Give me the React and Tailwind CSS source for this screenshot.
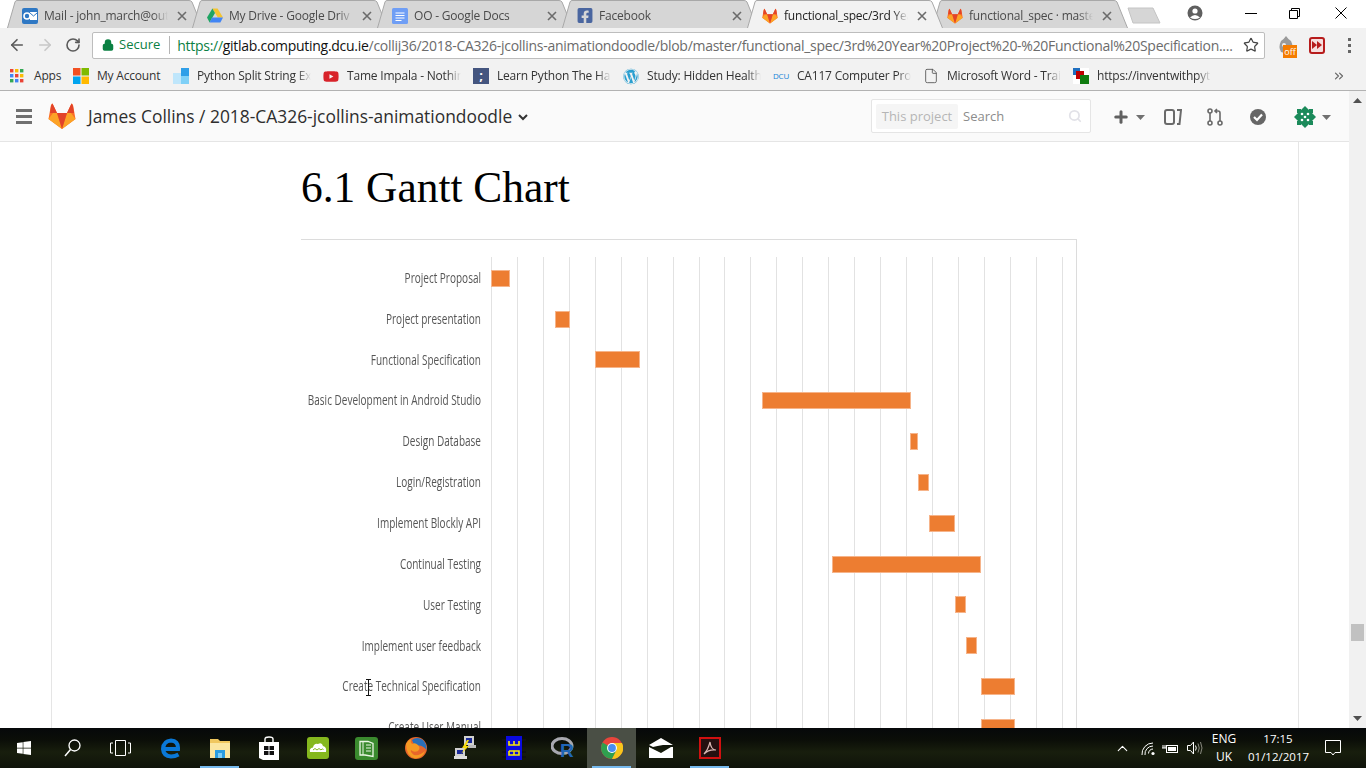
import { ArrowLeft, ArrowRight, RotateCw, Star, ChevronsRight, Search, ChevronUp, Lock, File, Plus } from "lucide-react";
import { FaWindows, FaWordpress, FaYoutube, FaFacebookSquare } from "react-icons/fa";

const GitlabLogo = ({ size = 16 }) => (
  <svg width={size} height={size} viewBox="0 0 28 26">
    <path d="M14 26 L0.5 16 L3 2 Q3.5 0.5 4.5 0.5 L9 10 H19 L23.5 0.5 Q24.5 0.5 25 2 L27.5 16 Z" fill="#fc6d26" />
    <path d="M14 26 L0.5 16 L5 10 H9 Z" fill="#fca326" />
    <path d="M14 26 L27.5 16 L23 10 H19 Z" fill="#fca326" />
    <path d="M14 26 L9 10 H19 Z" fill="#e24329" />
    <path d="M4.5 0.5 L9 10 H2 L3 3 Z M23.5 0.5 L19 10 H26 L25 3 Z" fill="#e24329" />
  </svg>
);

const Outlook = () => (
  <svg width="16" height="16" viewBox="0 0 16 16">
    <rect x="0" y="0" width="16" height="16" rx="2" fill="#2f78c4" />
    <rect x="8" y="4" width="7" height="8" fill="#fff" />
    <path d="M8 5 L11.5 8 L15 5" stroke="#2f78c4" fill="none" />
    <circle cx="5" cy="8" r="3" fill="none" stroke="#fff" strokeWidth="1.6" />
  </svg>
);

const Drive = () => (
  <svg width="16" height="15" viewBox="0 0 16 14">
    <path d="M5.4 0 H10.6 L16 9 H10.8 Z" fill="#f4c430" />
    <path d="M5.4 0 L0 9 L2.6 14 L8 4.6 Z" fill="#1fa463" />
    <path d="M5 9 H16 L13.4 14 H2.6 Z" fill="#4285f4" />
  </svg>
);

const Docs = () => (
  <svg width="16" height="16" viewBox="0 0 16 16">
    <rect width="16" height="16" rx="1.5" fill="#6f9ef5" />
    <path d="M3.5 5 H12.5 M3.5 7.5 H12.5 M3.5 10 H12.5 M3.5 12.5 H9.5" stroke="#fff" strokeWidth="1.2" />
  </svg>
);

const tabs = [
  { icon: <Outlook />, title: "Mail - john_march@out" },
  { icon: <Drive />, title: "My Drive - Google Driv" },
  { icon: <Docs />, title: "OO - Google Docs" },
  { icon: <FaFacebookSquare className="text-[#4a66a0] text-[17px]" />, title: "Facebook" },
  { icon: <GitlabLogo />, title: "functional_spec/3rd Yea", active: true },
  { icon: <GitlabLogo />, title: "functional_spec · maste" },
];

function Tab({ icon, title, active }) {
  return (
    <div className={`relative h-[28px] w-[196px] -mr-[11px] shrink-0 ${active ? "z-10" : ""}`}>
      <svg className="absolute inset-0" width="196" height="28" viewBox="0 0 196 28">
        <path d="M0.5 28 L8 2 Q8.5 0.5 10 0.5 L182 0.5 Q184 0.5 185 2 L195.5 28" fill={active ? "#f2f2f2" : "#d6d6d6"} stroke="#a8a8a8" />
      </svg>
      <div className="relative h-full flex items-center pl-[15px] pt-[3px]">
        <span className="w-[16px] h-[16px] flex items-center justify-center shrink-0">{icon}</span>
        <span className={`ml-[6px] w-[124px] whitespace-nowrap overflow-hidden tracking-[-0.2px] text-[12px] [mask-image:linear-gradient(to_right,black_88%,transparent)] ${active ? "text-[#222]" : "text-[#4a4a4a]"}`}>{title}</span>
        <svg className="ml-[9px]" width="10" height="10" viewBox="0 0 10 10">
          <path d="M1 1 L9 9 M9 1 L1 9" stroke="#6b6b6b" strokeWidth="1.6" />
        </svg>
      </div>
    </div>
  );
}

const AppsGrid = () => (
  <svg width="14" height="14" viewBox="0 0 14 14">
    {[
      ["#ea4335", 0, 0], ["#fbbc05", 5, 0], ["#34a853", 10, 0],
      ["#4285f4", 0, 5], ["#ea4335", 5, 5], ["#fbbc05", 10, 5],
      ["#34a853", 0, 10], ["#4285f4", 5, 10], ["#ea4335", 10, 10],
    ].map(([c, x, y], i) => <rect key={i} x={x} y={y} width="3.4" height="3.4" fill={c} />)}
  </svg>
);

const Microsoft = () => (
  <svg width="16" height="16" viewBox="0 0 16 16">
    <rect width="7.5" height="7.5" fill="#f25022" />
    <rect x="8.5" width="7.5" height="7.5" fill="#7fba00" />
    <rect y="8.5" width="7.5" height="7.5" fill="#00a4ef" />
    <rect x="8.5" y="8.5" width="7.5" height="7.5" fill="#ffb900" />
  </svg>
);

const BlueTiles = () => (
  <svg width="16" height="16" viewBox="0 0 16 16">
    <rect x="8" width="8" height="8" fill="#2f9fe8" />
    <rect y="5" width="8" height="11" fill="#bfe6fb" />
    <rect x="8" y="8" width="8" height="8" fill="#7fd0f7" />
  </svg>
);

const Semicolon = () => (
  <span className="w-[16px] h-[16px] bg-[#44557f] text-white text-[13px] font-bold leading-[15px] text-center">;</span>
);

const Overlap = () => (
  <svg width="16" height="16" viewBox="0 0 16 16">
    <rect width="16" height="16" fill="#fff" />
    <rect x="0" y="0" width="7" height="7" fill="#1f6fc0" />
    <rect x="3" y="3" width="8" height="8" fill="#c00000" />
    <rect x="7" y="7" width="9" height="9" fill="#107c10" />
  </svg>
);

const bookmarks = [
  { icon: <BlueTiles />, label: "Python Split String Ex" },
  { icon: <FaYoutube className="text-[#d8232a] text-[17px]" />, label: "Tame Impala - Nothin" },
  { icon: <Semicolon />, label: "Learn Python The Har" },
  { icon: <FaWordpress className="text-[#2a9fd0] text-[17px]" />, label: "Study: Hidden Health" },
  { icon: <span className="text-[8px] text-[#1683d8]">DCU</span>, label: "CA117 Computer Pro" },
  { icon: <File size={16} strokeWidth={1.3} className="text-[#555]" />, label: "Microsoft Word - Trai" },
  { icon: <Overlap />, label: "https://inventwithpyt" },
];

const tasks = [
  { name: "Project Proposal", from: 491, to: 510 },
  { name: "Project presentation", from: 555, to: 569.5 },
  { name: "Functional Specification", from: 595, to: 640 },
  { name: "Basic Development in Android Studio", from: 762, to: 910.5 },
  { name: "Design Database", from: 910, to: 918 },
  { name: "Login/Registration", from: 918, to: 929 },
  { name: "Implement Blockly API", from: 929, to: 955 },
  { name: "Continual Testing", from: 832, to: 981 },
  { name: "User Testing", from: 955, to: 966 },
  { name: "Implement user feedback", from: 966, to: 977 },
  { name: "Create Technical Specification", from: 981, to: 1014.5 },
  { name: "Create User Manual", from: 981, to: 1014.5 },
];

const gridLines = Array.from({ length: 23 }, (_, i) => i);

function GanttChart() {
  return (
    <div className="relative">
      <div className="absolute top-0 bottom-0 left-[190px] flex">
        {gridLines.map((i) => (
          <div key={i} className="w-[25.95px] border-l border-[#e2e2e2]" />
        ))}
      </div>
      {tasks.map((t) => (
        <div key={t.name} className="relative flex items-center h-[40.85px]">
          <div className="w-[180px] shrink-0 flex justify-end whitespace-nowrap text-[14px] text-[#555] scale-x-[0.715] origin-right">{t.name}</div>
          <div className="relative ml-[10px] flex-1 h-full">
            <div
              className="absolute top-[12.7px] h-[17px] bg-[#ed7d31] border border-[#f6b48a]"
              style={{ left: t.from - 491, width: t.to - t.from }}
            />
          </div>
        </div>
      ))}
      <svg className="absolute left-[64px] top-[422px]" width="7" height="17" viewBox="0 0 7 17">
        <path d="M1 0.5 H6 M3.5 0.5 V16.5 M1 16.5 H6" stroke="#111" />
      </svg>
    </div>
  );
}

const NavIcon = ({ children, className = "" }) => <span className={`flex items-center justify-center ${className}`}>{children}</span>;

const Caret = ({ color = "#707070" }) => (
  <svg width="9" height="5" viewBox="0 0 9 5"><path d="M0 0 H9 L4.5 5 Z" fill={color} /></svg>
);

const Avatar = () => (
  <svg width="24" height="24" viewBox="0 0 24 24">
    <path d="M12 1 L23 12 L12 23 L1 12 Z" fill="#1b8a5a" />
    <path d="M4 4 H8 V8 H4 Z M16 4 H20 V8 H16 Z M4 16 H8 V20 H4 Z M16 16 H20 V20 H16 Z" fill="#1b8a5a" />
    {[[9, 9], [15, 9], [9, 15], [15, 15], [12, 12]].map(([x, y]) => (
      <circle key={`${x}${y}`} cx={x} cy={y} r="1.3" fill="#fff" />
    ))}
  </svg>
);

const Chrome = () => (
  <svg width="22" height="22" viewBox="0 0 22 22">
    <circle cx="11" cy="11" r="11" fill="#e8453c" />
    <path d="M11 11 L1.5 5.5 A11 11 0 0 0 11 22 L16.5 12 Z" fill="#2fa04f" />
    <path d="M11 6 H21 A11 11 0 0 1 11 22 L16 12 Z" fill="#f8c51c" />
    <circle cx="11" cy="11" r="5" fill="#fff" />
    <circle cx="11" cy="11" r="3.9" fill="#4a8df0" />
  </svg>
);

const EdgeLogo = () => (
  <svg width="20" height="22" viewBox="0 0 20 22">
    <path d="M3 12 H17 Q17.5 4 10 3.5 Q2.5 4 2 12 Q2.5 19 10 19.5 Q14 19.5 17.5 17.5" fill="none" stroke="#0a78d7" strokeWidth="4" />
  </svg>
);

const Explorer = () => (
  <svg width="22" height="22" viewBox="0 0 22 22">
    <path d="M1 2 H9 L11 4 H21 V20 H1 Z" fill="#f0c75e" />
    <rect x="1" y="6" width="20" height="15" fill="#fbe6a0" />
    <path d="M6 21 V13 H16 V21 H13 V16 H9 V21 Z" fill="#2a9ce0" />
    <rect x="9" y="16" width="4" height="5" fill="#7fcdf5" />
  </svg>
);

const Store = () => (
  <svg width="20" height="24" viewBox="0 0 20 24">
    <path d="M6 6 V3 Q6 1 10 1 Q14 1 14 3 V6" fill="none" stroke="#fff" strokeWidth="1.4" />
    <path d="M0 6 H20 V24 H4 L0 22 Z" fill="#fff" />
    <path d="M5 10 H9.5 V14 H5 Z M10.5 10 H15 V14 H10.5 Z M5 15 H9.5 V19 H5 Z M10.5 15 H15 V19 H10.5 Z" fill="#111" />
  </svg>
);

const CloudApp = () => (
  <svg width="22" height="22" viewBox="0 0 22 22">
    <rect width="22" height="22" rx="3" fill="#85b81e" />
    <path d="M3 15 Q2 11 6 10.5 Q7 6 11 7 Q15 5 16 9 Q20 10 19 15 Z" fill="#fff" />
    <path d="M6 13 Q8 10 10 13 Q12 10 14 13 Q15 11 16.5 12.5" fill="none" stroke="#85b81e" />
  </svg>
);

const Notebook = () => (
  <svg width="23" height="23" viewBox="0 0 23 23">
    <rect width="23" height="23" rx="3" fill="#3a8a2e" />
    <path d="M5 4.5 H13 L18 6.5 V19.5 L10 18 H5 Z" fill="none" stroke="#eaf6e4" strokeWidth="1.3" />
    <path d="M8 4.5 V18 M11 8 H16 M11 11 H16 M11 14 H16" stroke="#eaf6e4" />
  </svg>
);

const Firefox = () => (
  <svg width="22" height="22" viewBox="0 0 22 22">
    <circle cx="11" cy="11" r="11" fill="#e8662a" />
    <path d="M7 3 Q12 -1 18 3 Q22 7 21.5 13 Q17 7 11 9 Q8 7 7 3 Z" fill="#2a6fb8" />
    <path d="M1 7 Q3 3 6 2 Q5 5 7 7 Q10 5 13 8 Q16 11 13 14 Q9 16 6 13 Q5 15 9 18 Q15 19 20 14 Q18 21 10 21.5 Q1 19 1 7 Z" fill="#f59a23" />
  </svg>
);

const Putty = () => (
  <svg width="22" height="24" viewBox="0 0 22 24">
    <rect x="10" y="0" width="10" height="9" fill="#d0d0d0" />
    <rect x="12" y="2" width="6" height="5" fill="#1a2a9a" />
    <rect x="14" y="9" width="8" height="3" fill="#bbb" />
    <rect x="1" y="12" width="10" height="8" fill="#d0d0d0" />
    <rect x="3" y="14" width="6" height="4" fill="#1a2a9a" />
    <rect x="0" y="20" width="13" height="3" fill="#ddd" />
    <path d="M13 4 L8 12 H11 L7 18 L15 10 H12 L15 4 Z" fill="#f5d90a" />
  </svg>
);

const W3Chip = () => (
  <svg width="24" height="24" viewBox="0 0 24 24">
    <path d="M0 4 H4 M20 4 H24 M0 10 H4 M20 10 H24 M0 16 H4 M20 16 H24 M0 21 H4 M20 21 H24" stroke="#111" strokeWidth="2" />
    <rect x="4" y="0" width="16" height="24" fill="#0a0ae0" />
    <path d="M7 5 V9 H17 V5 M12 5 V9 M7 15 V19 H17 V15 H7 M12 15 V19" fill="none" stroke="#f5e60a" strokeWidth="1.6" />
  </svg>
);

const RLogo = () => (
  <svg width="24" height="22" viewBox="0 0 24 22">
    <ellipse cx="11" cy="9" rx="10" ry="7.5" fill="none" stroke="#a8a8b0" strokeWidth="3" />
    <text x="9" y="20" fontSize="19" fontWeight="bold" fontFamily="Liberation Sans" fill="#1f65b7">R</text>
  </svg>
);

const MailTile = () => (
  <svg width="24" height="20" viewBox="0 0 24 20">
    <path d="M0 7 L12 0 L24 7 L14 7 Q8 8 4 9 Z" fill="#fff" />
    <path d="M0 9 L12 15 L22 9 L24 9 V20 H0 Z" fill="#fff" />
  </svg>
);

const Acrobat = () => (
  <span className="w-[22px] h-[22px] bg-[#241010] border-2 border-[#d01010] flex items-center justify-center">
    <svg width="14" height="14" viewBox="0 0 14 14">
      <path d="M1 13 Q5 9 7 1 Q8 9 13 9 Q6 8 1 13 Z" fill="none" stroke="#d8b8b4" strokeWidth="1.2" />
    </svg>
  </span>
);

const WifiArcs = () => (
  <svg width="16" height="15" viewBox="0 0 16 15">
    <circle cx="13" cy="12.5" r="1.6" fill="#fff" />
    <path d="M8.5 12.5 A4.5 4.5 0 0 1 13 8 M5 14 A8 8 0 0 1 13 5 M2 14 A11 11 0 0 1 13 2" fill="none" stroke="#fff" />
  </svg>
);

const Speaker = () => (
  <svg width="17" height="14" viewBox="0 0 17 14">
    <path d="M0.5 4.5 H3.5 L6.5 1 V13 L3.5 9.5 H0.5 Z" fill="none" stroke="#fff" />
    <path d="M8.5 4.5 Q10 7 8.5 9.5" fill="none" stroke="#fff" />
    <path d="M11 2.5 Q13.5 7 11 11.5 M13.5 1 Q16.5 7 13.5 13" fill="none" stroke="#8a8a80" />
  </svg>
);

const taskbarIcons = [
  { key: "edge", icon: <EdgeLogo /> },
  { key: "explorer", icon: <Explorer />, open: true },
  { key: "store", icon: <Store /> },
  { key: "cloud", icon: <CloudApp /> },
  { key: "notes", icon: <Notebook /> },
  { key: "firefox", icon: <Firefox /> },
  { key: "putty", icon: <Putty /> },
  { key: "w3", icon: <W3Chip /> },
  { key: "r", icon: <RLogo /> },
  { key: "chrome", icon: <Chrome />, open: true, current: true },
  { key: "mail", icon: <MailTile /> },
  { key: "acrobat", icon: <Acrobat />, open: true },
];

export default function App() {
  return (
    <div className="w-[1366px] h-[768px] overflow-hidden flex flex-col bg-white font-['Open_Sans',sans-serif]">
      {/* tab strip */}
      <div className="h-[28px] shrink-0 flex bg-white pl-[7px] relative">
        {tabs.map((t) => <Tab key={t.title} {...t} />)}
        <svg className="ml-[10px] mt-[7px]" width="34" height="17" viewBox="0 0 34 17">
          <path d="M1 1 H26 L33 16 H6 Z" fill="#d6d6d6" stroke="#c4c4c4" />
        </svg>
        <div className="ml-auto flex items-center h-[28px] pb-[2px]">
          <svg width="16" height="16" viewBox="0 0 16 16" className="mr-[42px]">
            <circle cx="8" cy="8" r="7.5" fill="#5f5f5f" />
            <circle cx="8" cy="6" r="2.6" fill="#fff" />
            <path d="M3 12.5 Q8 7.5 13 12.5 Q8 15.5 3 12.5 Z" fill="#fff" />
          </svg>
          <span className="w-[12px] h-[1px] bg-black mr-[32px]" />
          <svg width="11" height="11" viewBox="0 0 11 11" className="mr-[35px]">
            <path d="M0.5 2.5 H8.5 V10.5 H0.5 Z M2.5 2.5 V0.5 H10.5 V8.5 H8.5" fill="none" stroke="#000" />
          </svg>
          <svg width="12" height="12" viewBox="0 0 12 12" className="mr-[19px]">
            <path d="M0.5 0.5 L11.5 11.5 M11.5 0.5 L0.5 11.5" stroke="#000" />
          </svg>
        </div>
      </div>

      {/* toolbar */}
      <div className="h-[34px] shrink-0 bg-[#f2f2f2] flex items-center relative">
        <ArrowLeft size={18} strokeWidth={2.2} className="ml-[8px] text-[#5a5a5a]" />
        <ArrowRight size={18} strokeWidth={2.2} className="ml-[10px] text-[#c8c8c8]" />
        <RotateCw size={16} strokeWidth={2.4} className="ml-[11px] text-[#5a5a5a]" />
        <div className="ml-[11px] w-[1173px] h-[27px] bg-white border border-[#bdbdbd] rounded-[2px] flex items-center">
          <Lock size={12} strokeWidth={3} className="ml-[9px] text-[#0b8043] fill-[#0b8043]" />
          <span className="ml-[5px] text-[13px] text-[#0b8043]">Secure</span>
          <span className="ml-[9px] w-[1px] h-[18px] bg-[#b5b5b5]" />
          <span className="ml-[7px] text-[14px] whitespace-nowrap tracking-[-0.28px] text-[#6b6b6b]">
            <span className="text-[#0b8043]">https://</span>
            <span className="text-[#111]">gitlab.computing.dcu.ie</span>
            /collij36/2018-CA326-jcollins-animationdoodle/blob/master/functional_spec/3rd%20Year%20Project%20-%20Functional%20Specification....
          </span>
          <Star size={16} strokeWidth={1.8} className="ml-auto mr-[5px] text-[#444] shrink-0" />
        </div>
        <span className="relative ml-[11px] w-[20px] h-[20px] flex items-center justify-center">
          <svg width="16" height="18" viewBox="0 0 16 18">
            <path d="M8 0 Q6 3 3 5 Q0 11 3 16 Q8 18 13 16 Q16 11 13 5 Q10 3 8 0 Z" fill="#9a9a9a" />
            <circle cx="6" cy="9" r="2" fill="#eee" />
          </svg>
          <span className="absolute left-[7px] top-[10px] w-[14px] h-[13px] bg-[#f57c00] text-white text-[9px] leading-[13px] text-center">off</span>
        </span>
        <span className="ml-[13px] w-[16px] h-[17px] rounded-[3px] border-2 border-[#b71c1c] bg-[#f6dede] flex items-center justify-center">
          <svg width="10" height="8" viewBox="0 0 10 8"><path d="M0 0 L5 4 L0 8 Z M5 0 L10 4 L5 8 Z" fill="#b71c1c" /></svg>
        </span>
        <span className="ml-[23px] flex flex-col gap-[3px]">
          <i className="w-[3px] h-[3px] bg-[#666]" />
          <i className="w-[3px] h-[3px] bg-[#666]" />
          <i className="w-[3px] h-[3px] bg-[#666]" />
        </span>
      </div>

      {/* bookmarks bar */}
      <div className="h-[29px] shrink-0 bg-[#f2f2f2] border-b border-[#b2b2b2] flex items-center relative text-[12px] text-[#333] tracking-[-0.2px]">
        <span className="ml-[10px] w-[63px] flex items-center">
          <AppsGrid />
          <span className="ml-[10px]">Apps</span>
        </span>
        <span className="w-[100px] flex items-center">
          <Microsoft />
          <span className="ml-[8px] whitespace-nowrap">My Account</span>
        </span>
        {bookmarks.map((b) => (
          <span key={b.label} className="w-[150px] flex items-center">
            <span className="w-[16px] h-[16px] flex items-center justify-center">{b.icon}</span>
            <span className="ml-[8px] w-[114px] whitespace-nowrap overflow-hidden [mask-image:linear-gradient(to_right,black_88%,transparent)]">
              {b.label}
            </span>
          </span>
        ))}
        <ChevronsRight size={14} className="absolute left-[1332px] top-[7px] text-[#666]" />
      </div>

      {/* page + scrollbar */}
      <div className="flex-1 min-h-0 flex">
        <div className="flex-1 min-w-0 flex flex-col">
          <nav className="h-[51px] shrink-0 bg-[#fafafa] border-b border-[#e5e5e5] flex items-center">
            <span className="ml-[16px] w-[16px] flex flex-col gap-[3px]">
              <i className="h-[3px] bg-[#707070]" />
              <i className="h-[3px] bg-[#707070]" />
              <i className="h-[3px] bg-[#707070]" />
            </span>
            <span className="ml-[16px]"><GitlabLogo size={28} /></span>
            <span className="ml-[12px] text-[17.4px] text-[#2e2e2e] whitespace-nowrap">James Collins / 2018-CA326-jcollins-animationdoodle</span>
            <svg className="ml-[6px] mt-[2px]" width="10" height="7" viewBox="0 0 10 7"><path d="M1 1 L5 5 L9 1" fill="none" stroke="#333" strokeWidth="2" /></svg>
            <div className="ml-auto mr-[258px] w-[220px] h-[34px] bg-white border border-[#e5e5e5] rounded-[2px] flex items-center pl-[4px]">
              <span className="h-[25px] w-[82px] pt-[1px] bg-[#f5f5f5] rounded-[2px] text-[13px] text-[#b5b5b5] flex items-center justify-center whitespace-nowrap">This project</span>
              <span className="ml-[5px] pt-[1px] text-[13px] text-[#8c8c8c]">Search</span>
              <Search size={14} strokeWidth={3} className="ml-auto mr-[8px] text-[#e2e2e8]" />
            </div>
            <div className="absolute left-[1112px] top-[104px] h-[26px] flex items-center">
              <Plus size={18} strokeWidth={4} className="text-[#606060]" />
              <NavIcon className="ml-[6px]"><Caret /></NavIcon>
              <svg className="ml-[19px]" width="18" height="16" viewBox="0 0 18 16">
                <rect x="1" y="1" width="9" height="14" rx="2" fill="none" stroke="#6a6a6a" strokeWidth="2" />
                <path d="M13 1 H17 L15.5 15 H13" fill="none" stroke="#6a6a6a" strokeWidth="2" />
              </svg>
              <svg className="ml-[25px]" width="16" height="18" viewBox="0 0 16 18">
                <circle cx="3" cy="3" r="2" fill="none" stroke="#6a6a6a" strokeWidth="1.6" />
                <circle cx="3" cy="15" r="2" fill="none" stroke="#6a6a6a" strokeWidth="1.6" />
                <circle cx="13" cy="15" r="2" fill="none" stroke="#6a6a6a" strokeWidth="1.6" />
                <path d="M3 5 V13 M13 13 V5 Q13 3 11 3 H8 M10 1 L8 3 L10 5" fill="none" stroke="#6a6a6a" strokeWidth="1.6" />
              </svg>
              <svg className="ml-[27px]" width="16" height="16" viewBox="0 0 16 16">
                <circle cx="8" cy="8" r="8" fill="#666" />
                <path d="M4 8 L7 11 L12 5.5" fill="none" stroke="#fff" strokeWidth="2.2" />
              </svg>
              <span className="ml-[27px]"><Avatar /></span>
              <NavIcon className="ml-[5px]"><Caret /></NavIcon>
            </div>
          </nav>
          <main className="flex-1 min-h-0 overflow-hidden bg-white">
            <div className="ml-[51px] w-[1248px] h-full border-x border-[#e5e5e5] pl-[249px] pt-[20px]">
              <h1 className="font-['Liberation_Serif',serif] text-[43.4px] leading-[50px] text-black">6.1 Gantt Chart</h1>
              <div className="mt-[27px] w-[776px] border-t border-r border-[#dcdcdc] pt-[17px]">
                <GanttChart />
              </div>
            </div>
          </main>
        </div>
        <div className="w-[17px] shrink-0 bg-[#f1f1f1] flex flex-col items-center pt-[7px] pb-[7px]">
          <svg width="9" height="5" viewBox="0 0 9 5"><path d="M4.5 0 L9 5 H0 Z" fill="#505050" /></svg>
          <span className="mt-[521px] w-[13px] h-[17px] bg-[#c1c1c1]" />
          <svg className="mt-auto" width="9" height="5" viewBox="0 0 9 5"><path d="M0 0 H9 L4.5 5 Z" fill="#505050" /></svg>
        </div>
      </div>

      {/* windows taskbar */}
      <div className="h-[40px] shrink-0 flex items-center text-white text-[12px] bg-[linear-gradient(to_bottom,#06080a_0%,#0b0e08_30%,#181e0d_60%,#0f130a_100%)]">
        <span className="w-[48px] flex justify-center"><FaWindows className="text-[16px]" /></span>
        <span className="w-[48px] flex justify-center">
          <svg width="17" height="18" viewBox="0 0 17 18"><circle cx="10.5" cy="6.5" r="5.5" fill="none" stroke="#fff" strokeWidth="1.3" /><path d="M6.5 10.5 L1 17" stroke="#fff" strokeWidth="1.5" /></svg>
        </span>
        <span className="w-[48px] flex justify-center">
          <svg width="21" height="16" viewBox="0 0 21 16"><path d="M5.5 0.5 H15.5 V15.5 H5.5 Z M3 3 H0.5 V13 H3 M18 3 H20.5 V13 H18" fill="none" stroke="#fff" /></svg>
        </span>
        <span className="w-[2px]" />
        {taskbarIcons.map((t) => (
          <span key={t.key} className={`relative w-[49px] h-[40px] flex items-center justify-center ${t.current ? "bg-[#4a4f45]" : ""}`}>
            {t.icon}
            {t.open && <span className="absolute bottom-0 left-[5px] right-[5px] h-[2px] bg-[#76b9ed]" />}
          </span>
        ))}
        <ChevronUp size={17} strokeWidth={1.6} className="ml-auto mr-[9px]" />
        <span className="mr-[6px]"><WifiArcs /></span>
        <svg className="mr-[8px]" width="17" height="11" viewBox="0 0 17 11">
          <rect x="4.5" y="2.5" width="11" height="7" fill="none" stroke="#fff" />
          <rect x="6" y="4" width="8" height="4" fill="#fff" />
          <path d="M0 5 H4 M1 2 V5 M3 2 V5" stroke="#fff" />
        </svg>
        <span className="mr-[5px]"><Speaker /></span>
        <span className="w-[30px] text-center leading-[18px] mr-[9px]">ENG<br />UK</span>
        <span className="w-[60px] text-center text-[11.5px] leading-[18px] mr-[17px]">17:15<br />01/12/2017</span>
        <svg className="mr-[25px]" width="16" height="16" viewBox="0 0 16 16"><path d="M0.5 0.5 H15.5 V12.5 H10 L8 15 L6 12.5 H0.5 Z" fill="none" stroke="#fff" /></svg>
      </div>
    </div>
  );
}
